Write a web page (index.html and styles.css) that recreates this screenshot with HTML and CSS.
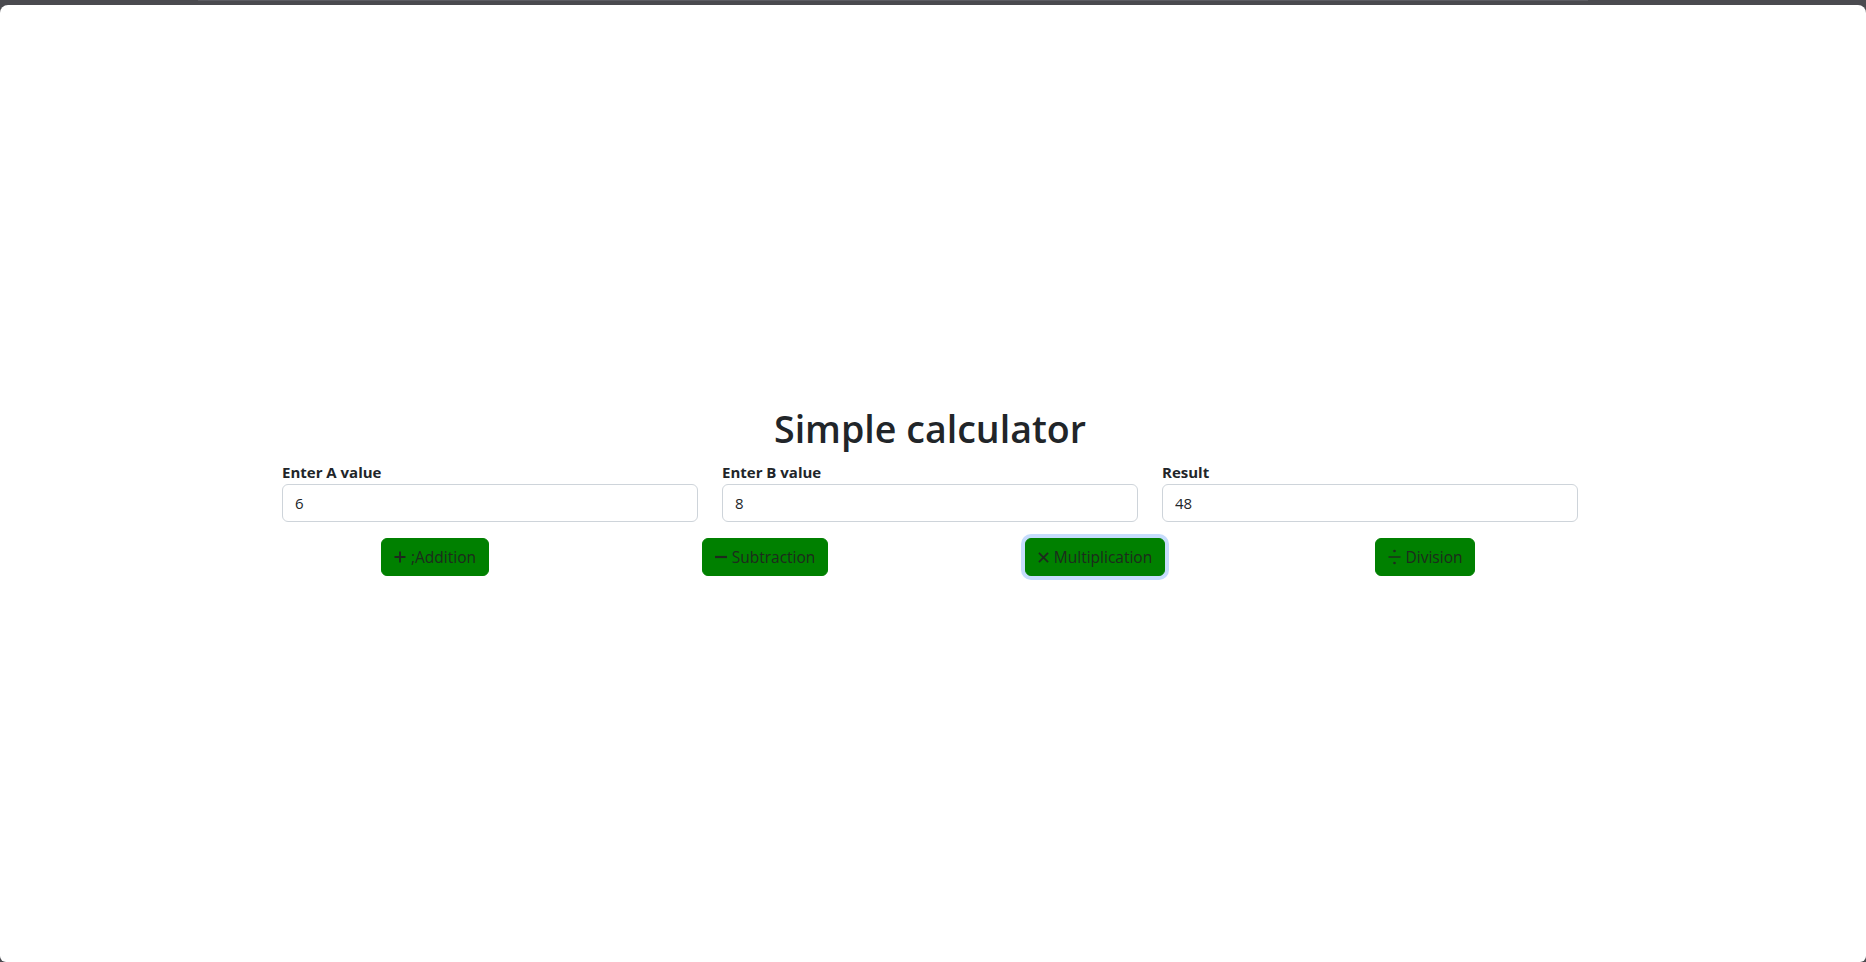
FILE: index.html
```html
<!DOCTYPE html>
<html lang="en">
<head>
<meta charset="utf-8">
<title>Simple calculator</title>
<link rel="stylesheet" href="styles.css">
</head>
<body>
<div class="topbar"><div class="topbar-hl"></div></div>
<div class="window">
  <main class="container">
    <h1 class="title">Simple calculator</h1>
    <div class="fields">
      <div class="field">
        <label class="field-label" for="a">Enter A value</label>
        <input class="field-input" id="a" type="text" value="6">
      </div>
      <div class="field">
        <label class="field-label" for="b">Enter B value</label>
        <input class="field-input" id="b" type="text" value="8">
      </div>
      <div class="field">
        <label class="field-label" for="r">Result</label>
        <input class="field-input" id="r" type="text" value="48">
      </div>
    </div>
    <div class="actions">
      <div class="action">
        <button class="btn" type="button">
          <svg class="ico" viewBox="0 0 12 12" width="12" height="12"><path d="M6 0.5v11M0.5 6h11" stroke="currentColor" stroke-width="2" fill="none"/></svg>;Addition
        </button>
      </div>
      <div class="action">
        <button class="btn" type="button">
          <svg class="ico" viewBox="0 0 12 12" width="12" height="12"><path d="M0 6h12" stroke="currentColor" stroke-width="2.2" fill="none"/></svg>Subtraction
        </button>
      </div>
      <div class="action">
        <button class="btn btn-focus" type="button">
          <svg class="ico" viewBox="0 0 12 12" width="11" height="11"><path d="M1 1l10 10M11 1L1 11" stroke="currentColor" stroke-width="2" fill="none"/></svg>Multiplication
        </button>
      </div>
      <div class="action">
        <button class="btn" type="button">
          <svg class="ico" viewBox="0 0 13 16" width="13" height="16"><path d="M0.5 8h12" stroke="currentColor" stroke-width="1.4" fill="none"/><circle cx="6.5" cy="2" r="1.3" fill="currentColor"/><circle cx="6.5" cy="14" r="1.3" fill="currentColor"/></svg>Division
        </button>
      </div>
    </div>
  </main>
</div>
</body>
</html>
```

FILE: styles.css
```css
* { box-sizing: border-box; }

html, body {
  margin: 0;
  padding: 0;
  height: 100%;
}

body {
  background: #4a4a4f;
  font-family: "Open Sans", "Noto Sans", "Liberation Sans", sans-serif;
  color: #212529;
  overflow: hidden;
}

.topbar {
  height: 5px;
  background: #4a4a4f;
  display: flex;
  justify-content: center;
}

.topbar-hl {
  margin-left: -80px;
  width: 1390px;
  height: 1px;
  background: #5c5c62;
}

.window {
  height: 957px;
  background: #ffffff;
  border-radius: 8px 8px 6px 6px;
  padding-right: 6px;
  padding-top: 400px;
}

.container {
  width: 1320px;
  margin: 0 auto;
}

.title {
  margin: 0 0 8px;
  font-size: 37.6px;
  line-height: 47px;
  font-weight: 600;
  text-align: center;
  color: #212529;
}

.fields {
  display: grid;
  grid-template-columns: repeat(3, 1fr);
  padding: 0 12px;
  column-gap: 24px;
}

.field {
  display: flex;
  flex-direction: column;
}

.field-label {
  font-size: 15px;
  line-height: 24px;
  font-weight: 700;
  color: #212529;
}

.field-input {
  height: 38px;
  padding: 6px 12px;
  font-family: inherit;
  font-size: 15px;
  color: #212529;
  background: #fff;
  border: 1px solid #ced4da;
  border-radius: 6px;
  outline: none;
}

.actions {
  display: grid;
  grid-template-columns: repeat(4, 1fr);
  margin-top: 16px;
}

.action {
  display: flex;
  justify-content: center;
}

.btn {
  display: inline-flex;
  align-items: center;
  gap: 5px;
  height: 38px;
  padding: 6px 12px;
  font-family: inherit;
  font-size: 15.5px;
  line-height: 24px;
  color: #1d2a1d;
  background: #008000;
  border: 1px solid #008000;
  border-radius: 6px;
}

.btn-focus {
  box-shadow: 0 0 0 4px #c6dcfc;
}

.ico {
  display: block;
  flex: none;
}
```
